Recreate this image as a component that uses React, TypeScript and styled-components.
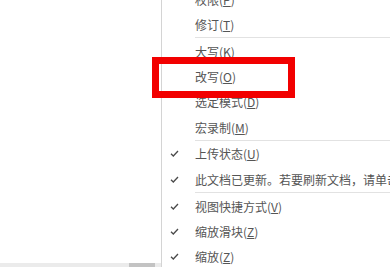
import styled, { createGlobalStyle } from 'styled-components'

const GlobalStyle = createGlobalStyle`
  html, body {
    margin: 0;
    padding: 0;
    background: #ffffff;
  }
  body {
    font-family: "Noto Sans CJK SC", "Noto Sans", sans-serif;
  }
`

const Page = styled.div`
  position: relative;
  display: flex;
  width: 390px;
  height: 267px;
  overflow: hidden;
  background: #ffffff;
`

const LeftPane = styled.div`
  width: 161px;
  flex-shrink: 0;
  display: flex;
  flex-direction: column;
  justify-content: flex-end;
`

const ScrollTrack = styled.div`
  height: 4px;
  background: #ebebeb;
  display: flex;
  justify-content: flex-end;
  padding-right: 6px;
`

const ScrollThumb = styled.div`
  width: 26px;
  background: #c3c3c3;
`

const Menu = styled.div`
  flex: 1;
  border-left: 1px solid #d4d4d4;
  background: #ffffff;
  overflow: hidden;
`

const List = styled.div`
  margin-top: -13.45px;
`

const Row = styled.div`
  display: flex;
  align-items: center;
  height: 25.3px;
  white-space: nowrap;
  font-size: 12px;
  color: #555555;
`

const CheckCell = styled.div`
  width: 33px;
  flex-shrink: 0;
  display: flex;
  align-items: center;
  padding-left: 8px;
  box-sizing: border-box;
`

const Label = styled.span`
  letter-spacing: 0;
`

const Separator = styled.div`
  height: 1px;
  margin: 0.25px 0 0.25px 33px;
  background: #e2e2e2;
`

const Highlight = styled.div`
  position: absolute;
  left: 152px;
  top: 57px;
  width: 143px;
  height: 41px;
  box-sizing: border-box;
  border: 7px solid #f20000;
  pointer-events: none;
`

const Check = () => (
  <svg width="9" height="7" viewBox="0 0 9 7" fill="none">
    <path d="M1 3.8 L3.3 6 L8 1" stroke="#4a4a4a" strokeWidth="1.3" />
  </svg>
)

type Item =
  | { kind: 'item'; text: string; key: string; checked?: boolean }
  | { kind: 'sep' }

const items: Item[] = [
  { kind: 'item', text: '权限', key: 'P' },
  { kind: 'item', text: '修订', key: 'T' },
  { kind: 'sep' },
  { kind: 'item', text: '大写', key: 'K' },
  { kind: 'item', text: '改写', key: 'O' },
  { kind: 'item', text: '选定模式', key: 'D' },
  { kind: 'item', text: '宏录制', key: 'M' },
  { kind: 'sep' },
  { kind: 'item', text: '上传状态', key: 'U', checked: true },
  { kind: 'item', text: '此文档已更新。若要刷新文档，请单击此处', key: 'R', checked: true },
  { kind: 'sep' },
  { kind: 'item', text: '视图快捷方式', key: 'V', checked: true },
  { kind: 'item', text: '缩放滑块', key: 'Z', checked: true },
  { kind: 'item', text: '缩放', key: 'Z', checked: true },
]

function App() {
  return (
    <>
      <GlobalStyle />
      <Page>
        <LeftPane>
          <ScrollTrack>
            <ScrollThumb />
          </ScrollTrack>
        </LeftPane>
        <Menu>
          <List>
            {items.map((it, i) =>
              it.kind === 'sep' ? (
                <Separator key={i} />
              ) : (
                <Row key={i}>
                  <CheckCell>{it.checked && <Check />}</CheckCell>
                  <Label>
                    {it.text}(<u>{it.key}</u>)
                  </Label>
                </Row>
              )
            )}
          </List>
        </Menu>
        <Highlight />
      </Page>
    </>
  )
}

export default App
